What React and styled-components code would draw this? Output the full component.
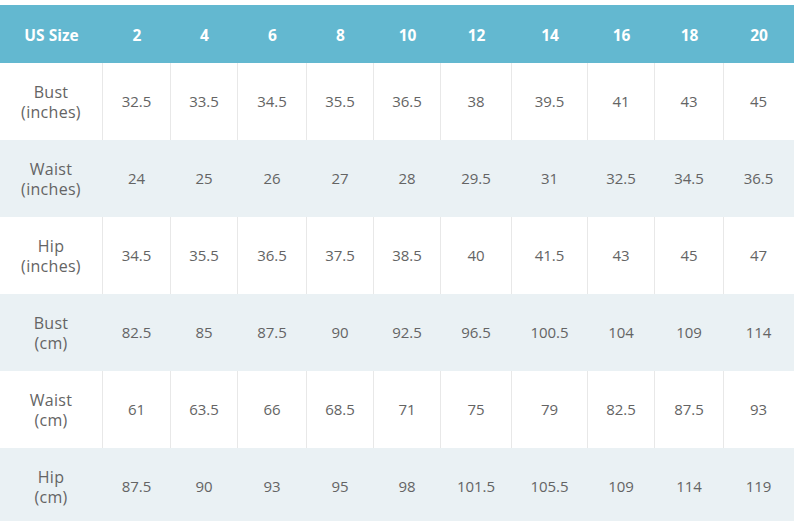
import React from 'react'
import styled, { createGlobalStyle } from 'styled-components'

const GlobalStyle = createGlobalStyle`
  html, body {
    margin: 0;
    padding: 0;
    background: #ffffff;
  }
  body {
    font-family: 'Open Sans', 'Noto Sans', Arial, sans-serif;
  }
`

const columns = [103, 68, 67, 69, 67, 67, 71, 76, 67, 69, 70]
const headerBlue = '#63b8d0'
const stripe = '#eaf1f4'

const Wrapper = styled('div')`
  width: 794px;
  height: 521px;
  padding-top: 5px;
  box-sizing: border-box;
  overflow: hidden;
`

const Grid = styled('div')`
  display: grid;
  grid-template-columns: ${columns.map((w) => `${w}px`).join(' ')};
  grid-auto-rows: 77px;
  grid-template-rows: 58px;
`

const HeadCell = styled('div')`
  background-color: ${headerBlue};
  color: #ffffff;
  font-weight: 700;
  font-size: 15.5px;
  display: flex;
  align-items: center;
  justify-content: center;
  padding-top: 1px;
`

const Cell = styled('div')`
  display: flex;
  flex-direction: column;
  align-items: center;
  justify-content: center;
  text-align: center;
  color: #646464;
  font-size: 15px;
  line-height: 19px;
  background-color: ${(p) => (p.$shaded ? stripe : '#ffffff')};
  border-right: 1px solid ${(p) => (p.$shaded || p.$last ? 'transparent' : '#e8e8e8')};
  box-sizing: border-box;
`

const LabelLine = styled('span')`
  display: block;
  font-size: 16px;
  line-height: 20px;
  letter-spacing: 0.3px;
`

const sizes = ['2', '4', '6', '8', '10', '12', '14', '16', '18', '20']

const rows = [
  { label: ['Bust', '(inches)'], values: ['32.5', '33.5', '34.5', '35.5', '36.5', '38', '39.5', '41', '43', '45'] },
  { label: ['Waist', '(inches)'], values: ['24', '25', '26', '27', '28', '29.5', '31', '32.5', '34.5', '36.5'] },
  { label: ['Hip', '(inches)'], values: ['34.5', '35.5', '36.5', '37.5', '38.5', '40', '41.5', '43', '45', '47'] },
  { label: ['Bust', '(cm)'], values: ['82.5', '85', '87.5', '90', '92.5', '96.5', '100.5', '104', '109', '114'] },
  { label: ['Waist', '(cm)'], values: ['61', '63.5', '66', '68.5', '71', '75', '79', '82.5', '87.5', '93'] },
  { label: ['Hip', '(cm)'], values: ['87.5', '90', '93', '95', '98', '101.5', '105.5', '109', '114', '119'] },
]

export default function App() {
  return (
    <Wrapper>
      <GlobalStyle />
      <Grid>
        <HeadCell>US Size</HeadCell>
        {sizes.map((s) => (
          <HeadCell key={s}>{s}</HeadCell>
        ))}
        {rows.map((row, i) => {
          const shaded = i % 2 === 1
          return (
            <React.Fragment key={i}>
              <Cell $shaded={shaded}>
                <LabelLine>{row.label[0]}</LabelLine>
                <LabelLine>{row.label[1]}</LabelLine>
              </Cell>
              {row.values.map((v, j) => (
                <Cell key={j} $shaded={shaded} $last={j === row.values.length - 1}>
                  {v}
                </Cell>
              ))}
            </React.Fragment>
          )
        })}
      </Grid>
    </Wrapper>
  )
}
